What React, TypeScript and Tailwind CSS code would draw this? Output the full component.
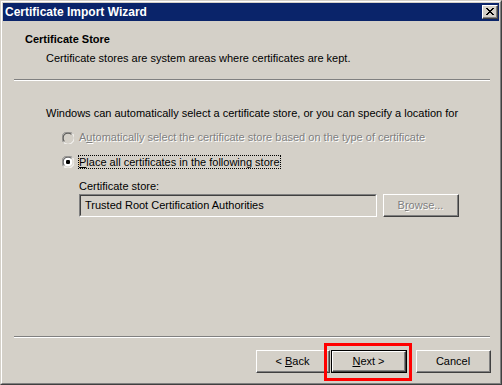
import React from "react";

const font = { fontFamily: '"Liberation Sans", Arial, sans-serif' };

function Radio({ checked, disabled }: { checked?: boolean; disabled?: boolean }) {
  return (
    <svg width="12" height="12" viewBox="0 0 12 12" className="shrink-0">
      <circle cx="6" cy="6" r="5.5" fill={disabled ? "#d4d0c8" : "#ffffff"} />
      <path d="M1.6 10.4 A5.5 5.5 0 0 1 10.4 1.6" fill="none" stroke="#808080" strokeWidth="1" />
      <path d="M10.4 1.6 A5.5 5.5 0 0 1 1.6 10.4" fill="none" stroke="#ffffff" strokeWidth="1" />
      <path d="M2.5 9.5 A4.5 4.5 0 0 1 9.5 2.5" fill="none" stroke="#404040" strokeWidth="1" />
      <path d="M9.5 2.5 A4.5 4.5 0 0 1 2.5 9.5" fill="none" stroke="#d4d0c8" strokeWidth="1" />
      {checked && <rect x="4" y="4" width="4" height="4" rx="1.2" fill="#000" />}
    </svg>
  );
}

function Btn({ children, className = "", disabled }: { children: React.ReactNode; className?: string; disabled?: boolean }) {
  return (
    <div className={`h-[23px] border-t border-l border-t-white border-l-white border-r border-b border-r-[#404040] border-b-[#404040] bg-[#d4d0c8] ${className}`}>
      <div className={`h-full border-r border-b border-r-[#808080] border-b-[#808080] flex items-center justify-center text-[11px] ${disabled ? "text-[#808080] [text-shadow:1px_1px_0_#ffffff]" : "text-black"}`}>
        <span className="whitespace-pre">{children}</span>
      </div>
    </div>
  );
}

function Sep({ className = "" }: { className?: string }) {
  return <div className={`h-[2px] border-t border-t-[#808080] border-b border-b-white ${className}`} />;
}

export default function App() {
  return (
    <div style={font} className="w-[502px] h-[385px] bg-[#d4d0c8] border-t border-l border-t-[#d4d0c8] border-l-[#d4d0c8] border-r border-b border-r-[#404040] border-b-[#404040]">
      <div className="h-full border-t border-l border-t-white border-l-white border-r border-b border-r-[#808080] border-b-[#808080] p-px flex flex-col">
        {/* title bar */}
        <div className="h-[18px] bg-[#0a246a] flex items-center justify-between pl-[2px] pr-[1px]">
          <span className="text-white font-bold text-[12px] leading-[18px]">Certificate Import Wizard</span>
          <div className="w-[16px] h-[14px] border-t border-l border-t-white border-l-white border-r border-b border-r-[#404040] border-b-[#404040] bg-[#d4d0c8]">
            <div className="w-full h-full border-r border-b border-r-[#808080] border-b-[#808080] flex items-center justify-center">
              <svg width="8" height="7" viewBox="0 0 8 7">
                <path d="M0 0h2v1H0zM6 0h2v1H6zM1 1h2v1H1zM5 1h2v1H5zM2 2h4v1H2zM3 3h2v1H3zM2 4h4v1H2zM1 5h2v1H1zM5 5h2v1H5zM0 6h2v1H0zM6 6h2v1H6z" fill="#000" />
              </svg>
            </div>
          </div>
        </div>

        {/* header */}
        <div className="flex flex-col text-[11px] leading-[13px] text-black">
          <div className="mt-[12px] pl-[22px] font-bold">Certificate Store</div>
          <div className="mt-[6px] pl-[43px]">Certificate stores are system areas where certificates are kept.</div>
        </div>
        <Sep className="mt-[14px] ml-[11px] mr-[9px]" />

        {/* content */}
        <div className="flex-1 flex flex-col text-[11px] leading-[13px] text-black">
          <div className="mt-[26px] pl-[43px]">Windows can automatically select a certificate store, or you can specify a location for</div>
          <div className="mt-[11px] pl-[59px] flex items-center gap-[5px] h-[13px]">
            <Radio disabled />
            <span className="text-[#808080] [text-shadow:1px_1px_0_#ffffff]">
              A<u>u</u>tomatically select the certificate store based on the type of certificate
            </span>
          </div>
          <div className="mt-[11px] pl-[59px] flex items-center gap-[4px] h-[14px]">
            <Radio checked />
            <span className="border border-dotted border-black leading-[12px]">
              <u>P</u>lace all certificates in the following store
            </span>
          </div>
          <div className="mt-[11px] pl-[76px]">Certificate store:</div>
          <div className="mt-[1px] pl-[76px] flex items-center gap-[6px]">
            <div className="w-[298px] h-[23px] border-t border-l border-t-[#808080] border-l-[#808080] border-r border-b border-r-white border-b-white">
              <div className="h-full border-t border-l border-t-[#404040] border-l-[#404040] border-r border-b border-r-[#d4d0c8] border-b-[#d4d0c8] flex items-center pl-[4px]">
                Trusted Root Certification Authorities
              </div>
            </div>
            <Btn className="w-[76px]" disabled>
              B<u>r</u>owse...
            </Btn>
          </div>
        </div>

        <Sep className="ml-[11px] mr-[9px]" />

        {/* buttons */}
        <div className="mt-[12px] mb-[9px] flex items-center justify-end pr-[8px]">
          <Btn className="w-[74px]">
            {"< "}
            <u>B</u>ack
          </Btn>
          <div className="relative ml-[1px]">
            <div className="w-[76px] h-[23px] border border-black">
              <div className="h-full border-t border-l border-t-white border-l-white border-r border-b border-r-[#404040] border-b-[#404040] bg-[#d4d0c8]">
                <div className="h-full border-r border-b border-r-[#808080] border-b-[#808080] flex items-center justify-center text-[11px]">
                  <span className="whitespace-pre">
                    <u>N</u>
                    {"ext >"}
                  </span>
                </div>
              </div>
            </div>
            <div className="absolute left-[-7px] top-[-7px] w-[88px] h-[38px] border-[3px] border-[#ff0000]" />
          </div>
          <Btn className="w-[75px] ml-[9px]">Cancel</Btn>
        </div>
      </div>
    </div>
  );
}
